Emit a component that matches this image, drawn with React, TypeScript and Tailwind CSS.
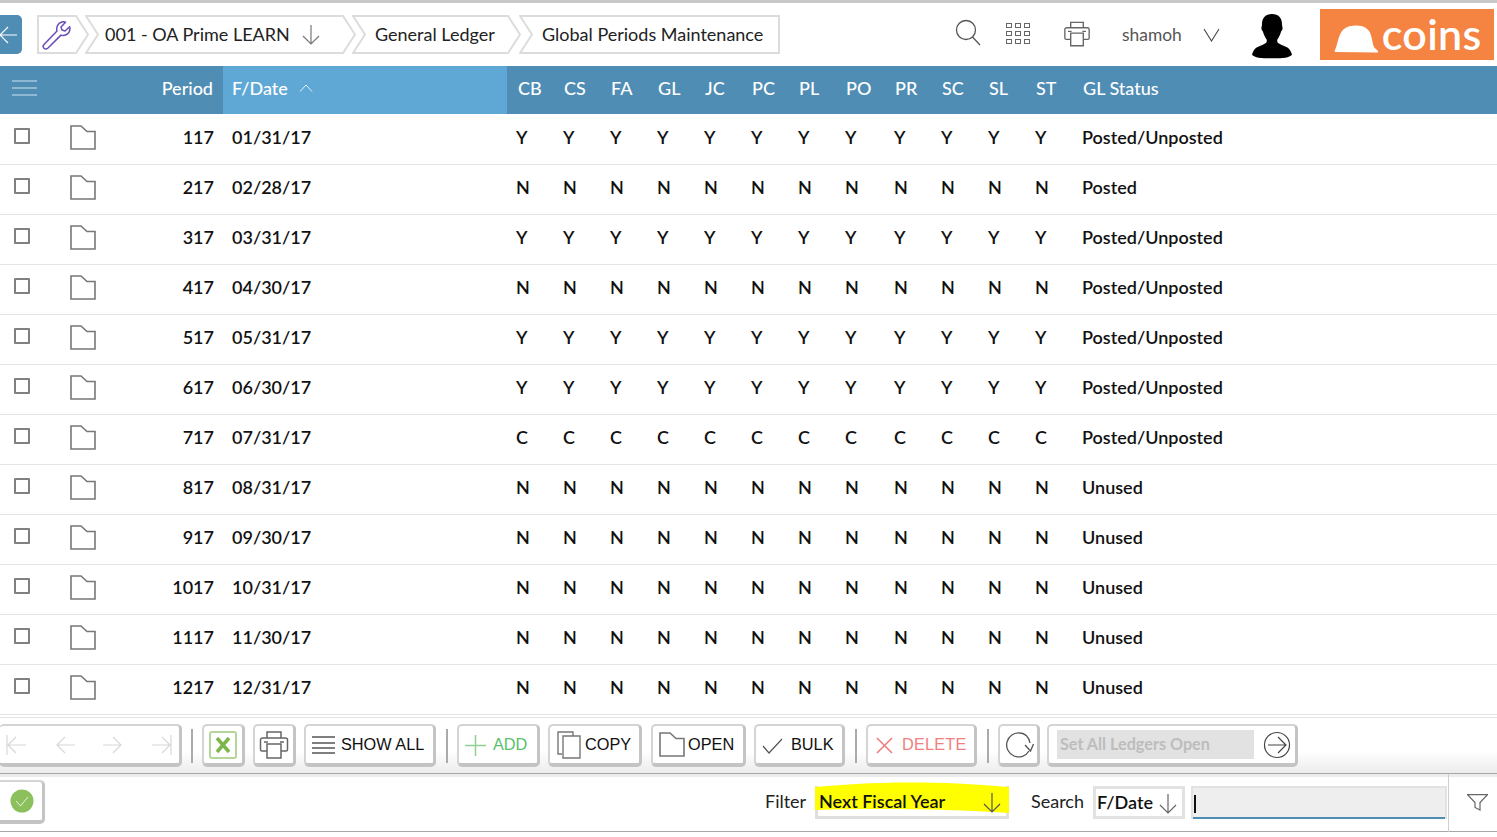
import React from "react";

const cols = "grid grid-cols-[60px_100px_63px_284px_56px_47px_47px_47px_47px_47px_47px_49px_47px_47px_47px_47px_1fr]";
const heads = ["CB","CS","FA","GL","JC","PC","PL","PO","PR","SC","SL","ST"];
const rows: [string,string,string,string][] = [
  ["117","01/31/17","Y","Posted/Unposted"],
  ["217","02/28/17","N","Posted"],
  ["317","03/31/17","Y","Posted/Unposted"],
  ["417","04/30/17","N","Posted/Unposted"],
  ["517","05/31/17","Y","Posted/Unposted"],
  ["617","06/30/17","Y","Posted/Unposted"],
  ["717","07/31/17","C","Posted/Unposted"],
  ["817","08/31/17","N","Unused"],
  ["917","09/30/17","N","Unused"],
  ["1017","10/31/17","N","Unused"],
  ["1117","11/30/17","N","Unused"],
  ["1217","12/31/17","N","Unused"],
];

const Folder = ({ className = "", c = "#777" }: { className?: string; c?: string }) => (
  <svg className={className} width="26" height="25" viewBox="0 0 26 25" fill="none" stroke={c} strokeWidth="1.6">
    <path d="M1 24V1h10l6 5.500h8V24z" />
  </svg>
);

const Printer = () => (
  <svg width="30" height="30" viewBox="0 0 30 30" fill="none" stroke="#666" strokeWidth="1.5">
    <path d="M8 8V2h14v6" />
    <path d="M8 21H3a1.5 1.5 0 0 1-1.5-1.5V10A2 2 0 0 1 3.500 8h23a2 2 0 0 1 2 2v9.500A1.500 1.500 0 0 1 27 21h-5" />
    <path d="M8 14h14v14H8z" />
    <path d="M5 12h4M21 12h4" />
  </svg>
);

const Arrow = ({ c = "#777", w = 18, h = 22 }: { c?: string; w?: number; h?: number }) => (
  <svg width={w} height={h} viewBox="0 0 18 22" fill="none" stroke={c} strokeWidth="1.2">
    <path d="M9 1v19M1 12l8 8 8-8" />
  </svg>
);

function Crumb({ w, first, last, children, className = "" }: { w: number; first?: boolean; last?: boolean; children: React.ReactNode; className?: string }) {
  const poly = last
    ? `1,1 ${w - 1},1 ${w - 1},38 1,38 13,19.500`
    : first
    ? `1,1 ${w - 13},1 ${w - 1},19.500 ${w - 13},38 1,38`
    : `1,1 ${w - 13},1 ${w - 1},19.500 ${w - 13},38 1,38 13,19.500`;
  return (
    <div className={`relative h-[39px] flex items-center shrink-0 ${className}`} style={{ width: w }}>
      <svg className="absolute inset-0" width={w} height={39} fill="white" stroke="#dcdcdc" strokeWidth="2">
        <polygon points={poly} />
      </svg>
      <div className="relative flex items-center text-[18px] text-[#222] whitespace-nowrap">{children}</div>
    </div>
  );
}

function Btn({ children, className = "" }: { children: React.ReactNode; className?: string }) {
  return (
    <div className={`h-[43px] shrink-0 flex items-center bg-white rounded-[5px] border-2 border-[#d4d4d4] border-b-[4px] border-b-[#c4c4c4] border-r-[3px] border-r-[#c4c4c4] [font-family:'Liberation_Sans',sans-serif] text-[16.3px] ${className}`}>
      {children}
    </div>
  );
}

const Sep = ({ className = "" }: { className?: string }) => <div className={`w-[2px] h-[34px] bg-[#aaa] shrink-0 ${className}`} />;

export default function App() {
  return (
    <div className="relative w-[1497px] h-[837px] overflow-hidden bg-white [font-family:Lato,sans-serif]">
      {/* top bar */}
      <div className="h-[66px] border-t-[3px] border-t-[#c8c8c8] flex items-start relative">
        <div className="w-[22px] h-[39px] mt-[12px] bg-[#4f8db5] rounded-r-[5px] flex items-center shrink-0">
          <svg width="18" height="20" viewBox="0 0 18 20" fill="none" stroke="#fff" strokeWidth="1.1">
            <path d="M0 10h17M8 2l-8 8 8 8" />
          </svg>
        </div>
        <div className="flex mt-[12px] ml-[15px]">
          <Crumb w={52} first className="pl-[5px]">
            <svg width="30" height="30" viewBox="0 0 30 30" fill="none" stroke="#6a4cb8" strokeWidth="1.500" strokeLinejoin="round">
              <path d="M2 24.500 15 11c-1-4 1-8 5-9 1.500-.4 2.500-.2 3.500.2L19 7l1 3 3 1 4.700-4.200c.6 3-.3 6-3.200 7.700-2 1.200-4 1.200-5.500.6L6 28c-1.500 1.300-3 1.200-4 .2s-1.200-2.500 0-3.700z" />
            </svg>
          </Crumb>
          <Crumb w={271} className="ml-[-4px] pl-[20px]">
            <span>001 - OA Prime LEARN</span>
            <span className="ml-[12px] mt-[1px]"><Arrow /></span>
          </Crumb>
          <Crumb w={169} className="ml-[-4px] pl-[23px]">General Ledger</Crumb>
          <Crumb w={261} last className="ml-[-2px] pl-[23px]">Global Periods Maintenance</Crumb>
        </div>
        <div className="ml-[175px] mt-[16px] shrink-0">
          <svg width="26" height="28" viewBox="0 0 26 28" fill="none" stroke="#555" strokeWidth="1.300">
            <circle cx="11" cy="11" r="9.500" />
            <path d="M17.500 18l7.500 8" />
          </svg>
        </div>
        <div className="ml-[25px] mt-[20px] grid grid-cols-3 gap-x-[3px] gap-y-[3px] shrink-0">
          {Array.from({ length: 9 }).map((_, i) => (
            <div key={i} className="w-[6px] h-[5px] border border-[#666]" />
          ))}
        </div>
        <div className="ml-[32px] mt-[16px] shrink-0 scale-90"><Printer /></div>
        <div className="ml-[30px] mt-[19px] text-[17.4px] text-[#555] shrink-0">shamoh</div>
        <svg className="ml-[21px] mt-[25px] shrink-0" width="17" height="14" viewBox="0 0 17 14" fill="none" stroke="#444" strokeWidth="1.100">
          <path d="M1 1l7.500 12L16 1" />
        </svg>
        <svg className="ml-[32px] mt-[10px] shrink-0" width="40" height="46" viewBox="0 0 40 46" fill="#000">
          <path d="M20 1c6.500 0 10 4 10 10 0 2.500.8 3 .5 5-.3 1.500-1 1.800-1.400 2.500-.8 3-2.200 6-3.600 7.700-.6 1.300-.4 3 1 4 2 1.500 5.500 2.500 8.500 4 2.500 1.300 4 4 5 7.500-3 3-8 3.500-20 3.500s-17-.5-20-3.500c1-3.500 2.500-6.200 5-7.500 3-1.500 6.500-2.500 8.500-4 1.400-1 1.600-2.700 1-4-1.400-1.700-2.800-4.700-3.600-7.700-.4-.7-1.100-1-1.400-2.500-.3-2 .5-2.500.5-5C10 5 13.500 1 20 1z" />
        </svg>
        <div className="ml-[28px] mt-[6px] w-[174px] h-[51px] bg-[#f58442] flex items-center shrink-0 overflow-hidden">
          <svg className="ml-[14px] mt-[8px] shrink-0" width="44" height="28" viewBox="0 0 41 26" fill="#fff">
            <path d="M1 25c-.5-.3-.3-1.500 0-2C3 20 4 8 9 4c3-2.500 7-3.500 12-3.500 7 0 11 3 13 7.500 1.500 4 2 10 3.500 13 1 1.500 3.300 2.500 3.500 3.500.2.600 0 1-.5 1z" />
          </svg>
          <span className="ml-[4px] text-[43px] leading-none text-white font-semibold tracking-[0.3px] mt-[-3px]">coins</span>
        </div>
      </div>

      {/* table header */}
      <div className={`${cols} h-[48px] bg-[#4f8db5] text-white text-[18px] font-medium items-stretch`}>
        <div className="flex items-center pl-[12px] pb-[4px]">
          <svg width="26" height="18" viewBox="0 0 26 18" stroke="#cfe3ef" strokeWidth="1.200" fill="none">
            <path d="M0 2h25M0 9h25M0 16h25" />
          </svg>
        </div>
        <div />
        <div className="flex items-center justify-end pr-[10px] pb-[4px]">Period</div>
        <div className="flex items-center pl-[9px] pb-[4px] bg-[#5fa8d6]">
          F/Date
          <svg className="ml-[11px]" width="14" height="8" viewBox="0 0 14 8" fill="none" stroke="#e4f1fa" strokeWidth="1">
            <path d="M1 7.500l6-6.500 6 6.500" />
          </svg>
        </div>
        {heads.map((h, i) => (
          <div key={h} className={`flex items-center pb-[4px] ${i === 0 ? "pl-[11px]" : "pl-[1px]"}`}>{h}</div>
        ))}
        <div className="flex items-center pl-[1px] pb-[4px]">GL Status</div>
      </div>

      {/* rows */}
      <div className="mt-[1px]">
        {rows.map((r) => (
          <div key={r[0]} className={`${cols} h-[50px] pb-[4px] border-b border-b-[#e4e4e4] items-center text-[18px] font-semibold text-[#111]`}>
            <div className="pl-[14px]">
              <div className="w-[16px] h-[16px] border-2 border-[#808080] rounded-[1px] mb-[4px] bg-white" />
            </div>
            <div className="pl-[10px]"><Folder /></div>
            <div className="text-right pr-[9px]">{r[0]}</div>
            <div className="pl-[9px]">{r[1]}</div>
            {heads.map((h, i) => (
              <div key={h} className={i === 0 ? "pl-[9px]" : ""}>{r[2]}</div>
            ))}
            <div>{r[3]}</div>
          </div>
        ))}
      </div>

      {/* toolbar */}
      <div className="h-[57px] border-t border-t-[#e4e4e4] mt-[2px] flex items-center bg-linear-to-b from-white from-60% to-[#ececec] border-b border-b-[#a8a8a8] relative">
        <Btn className="w-[183px] ml-[-1px] border-l-0 px-[7px] justify-between">
          {[0, 1, 2, 3].map((n) => (
            <svg key={n} width="20" height="22" viewBox="0 0 20 22" fill="none" stroke="#d8d8d8" strokeWidth="1.200">
              {n === 0 && <path d="M1 1v20M20 11H2M10 3l-8 8 8 8" />}
              {n === 1 && <path d="M20 11H2M10 3l-8 8 8 8" />}
              {n === 2 && <path d="M0 11h18M10 3l8 8-8 8" />}
              {n === 3 && <path d="M19 1v20M0 11h18M10 3l8 8-8 8" />}
            </svg>
          ))}
        </Btn>
        <Sep className="ml-[9px]" />
        <Btn className="w-[43px] ml-[9px] justify-center">
          <div className="w-[28px] h-[28px] border-2 border-[#b5d69b] rounded-[3px] flex items-center justify-center">
            <svg width="16" height="16" viewBox="0 0 16 16" stroke="#7ab648" strokeWidth="3.500" fill="none">
              <path d="M2 1l12 14M14 1L2 15" />
            </svg>
          </div>
        </Btn>
        <Btn className="w-[43px] ml-[8px] justify-center"><Printer /></Btn>
        <Btn className="w-[132px] ml-[8px] pl-[6px] text-[#111]">
          <svg width="23" height="18" viewBox="0 0 23 18" fill="none" stroke="#555" strokeWidth="1.300">
            <path d="M0 1h23M0 7h23M0 12h23M0 17h23" />
          </svg>
          <span className="ml-[6px]">SHOW ALL</span>
        </Btn>
        <Sep className="ml-[10px]" />
        <Btn className="w-[83px] ml-[9px] pl-[6px]">
          <svg width="21" height="21" viewBox="0 0 21 21" stroke="#8fcf94" strokeWidth="1.500" fill="none" className="mt-[2px]">
            <path d="M10.500 0v21M0 10.500h21" />
          </svg>
          <span className="ml-[7px] text-[#5bbf6c]">ADD</span>
        </Btn>
        <Btn className="w-[94px] ml-[8px] pl-[7px] text-[#111]">
          <svg width="24" height="28" viewBox="0 0 24 28" fill="none" stroke="#777" strokeWidth="1.400">
            <path d="M5 23H1V1h15v4" />
            <path d="M6 5h17v22H6z" fill="#fff" />
          </svg>
          <span className="ml-[4px]">COPY</span>
        </Btn>
        <Btn className="w-[95px] ml-[9px] pl-[6px] text-[#111]">
          <Folder />
          <span className="ml-[3px]">OPEN</span>
        </Btn>
        <Btn className="w-[91px] ml-[8px] pl-[6px] text-[#111]">
          <svg width="21" height="16" viewBox="0 0 21 16" fill="none" stroke="#555" strokeWidth="1.200" className="mt-[3px]">
            <path d="M1 8l6 7L20 1" />
          </svg>
          <span className="ml-[8px]">BULK</span>
        </Btn>
        <Sep className="ml-[10px]" />
        <Btn className="w-[111px] ml-[9px] pl-[8px]">
          <svg width="17" height="17" viewBox="0 0 17 17" stroke="#f07a7a" strokeWidth="1.500" fill="none" className="mt-[1px]">
            <path d="M1 1l15 15M16 1L1 16" />
          </svg>
          <span className="ml-[9px] tracking-[0.2px] text-[#f08080]">DELETE</span>
        </Btn>
        <Sep className="ml-[10px]" />
        <Btn className="w-[42px] ml-[9px] justify-center">
          <svg width="30" height="26" viewBox="0 0 30 26" fill="none" stroke="#555" strokeWidth="1.300">
            <path d="M25 19A12 12 0 1 1 16 1c5 0 9 4 10 10" />
            <path d="M21 13l5.500 6 3-7" />
          </svg>
        </Btn>
        <Btn className="w-[251px] ml-[7px] pl-[8px]">
          <div className="w-[197px] h-[29px] bg-[#e2e2e2] flex items-center pl-[3px] text-[16.2px] font-bold text-[#bdbdbd] [font-family:Lato,sans-serif]">Set All Ledgers Open</div>
          <svg className="ml-[9px]" width="28" height="28" viewBox="0 0 28 28" fill="none" stroke="#444" strokeWidth="1.200">
            <circle cx="14" cy="14" r="12.500" />
            <path d="M5 14h18M15 6l8 8-8 8" />
          </svg>
        </Btn>
      </div>

      {/* filter bar */}
      <div className="h-[58px] border-b border-b-[#a8a8a8] border-t-[3px] border-t-[#ececec] flex items-center text-[18px] text-[#222] relative">
        <Btn className="w-[45px] h-[44px] border-l-0 rounded-l-none pl-[10px] mb-[1px] -mt-[3px]">
          <svg width="24" height="24" viewBox="0 0 24 24" fill="none">
            <circle cx="12" cy="12" r="11.500" fill="#8bc05c" />
            <path d="M6 12l4.500 5L18 8" stroke="#e8f3df" strokeWidth="1" />
          </svg>
        </Btn>
        <div className="ml-[720px] shrink-0 w-[50px] -mt-[6px]">Filter</div>
        <div className="relative w-[194px] h-[33px] border-[3px] border-[#dedede] border-t-0 -mt-[3px] flex items-center shrink-0">
          <svg className="absolute left-[-3px] top-[-5px]" width="194" height="36" viewBox="0 0 194 36" fill="#ffff00">
            <path d="M0 6C40 2 110-2 194 6v26c-60-4-130-5-194-3z" />
          </svg>
          <span className="relative ml-[1px] font-semibold text-[#111]">Next Fiscal Year</span>
          <span className="absolute left-[165px] top-[6px]"><Arrow c="#555" /></span>
        </div>
        <div className="ml-[22px] w-[62px] shrink-0 -mt-[6px]">Search</div>
        <div className="w-[92px] h-[33px] border-[3px] border-[#e2e2e2] -mt-[3px] flex items-center pl-[1px] font-semibold text-[#111] shrink-0">
          <span>F/Date</span>
          <span className="ml-[6px] mt-[3px]"><Arrow c="#666" /></span>
        </div>
        <div className="ml-[6px] w-[256px] h-[33px] -mt-[3px] border-[2px] border-[#e2e2e2] border-b-0 bg-[#eeeeee] flex items-center shrink-0 relative">
          <div className="ml-[1px] w-[2px] h-[18px] bg-[#111]" />
          <div className="absolute left-0 right-0 bottom-0 h-[2px] bg-[#4f8db5]" />
        </div>
        <div className="ml-[1px] h-[58px] border-l border-l-[#cfcfcf] -mt-[3px] w-[50px] flex items-center pl-[18px] shrink-0">
          <svg width="21" height="17" viewBox="0 0 21 17" fill="none" stroke="#666" strokeWidth="1.200">
            <path d="M.5.6h20L13 8.500V16l-5-2.500v-5z" />
          </svg>
        </div>
      </div>
    </div>
  );
}
